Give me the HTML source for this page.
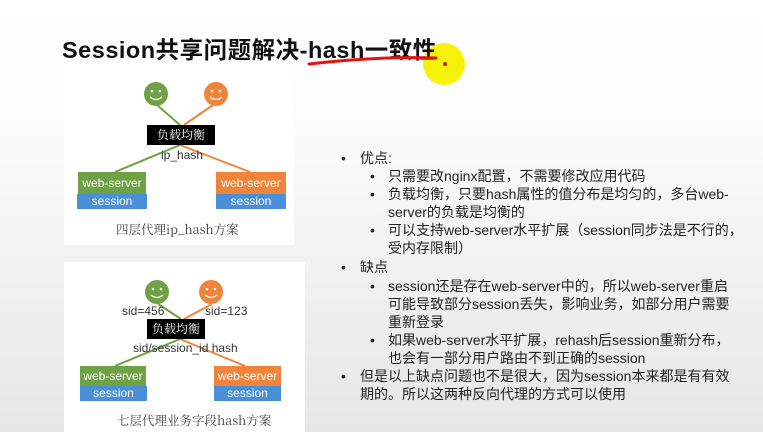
<!DOCTYPE html>
<html><head><meta charset="utf-8"><style>
*{margin:0;padding:0}
body{width:763px;height:432px;overflow:hidden;position:relative;background:linear-gradient(#fff 0,#fdfdfd 100px,#f3f3f3 250px,#e6e6e6 432px);font-family:"Liberation Sans","Noto Sans CJK SC",sans-serif}
.a{position:absolute;white-space:nowrap}
.t{left:62px;top:31px;font-size:23.5px;font-weight:bold;color:#111;letter-spacing:0.5px}
.card{position:absolute;background:#fff}
.bx{position:absolute;color:#fff;font-size:12px;text-align:center}
.b{position:absolute;font-size:12px;color:#333}
.l{position:absolute;white-space:nowrap;font-size:14px;color:#222;line-height:18px}
</style></head><body>
<svg class="a" style="left:0;top:0" width="763" height="432">
<circle cx="444" cy="64" r="21" fill="#f7f20a"/>
<circle cx="445" cy="64" r="2" fill="#d11"/>
</svg>
<div class="a t">Session共享问题解决-hash一致性</div>
<svg class="a" style="left:0;top:0" width="763" height="432">
<path d="M309 64 Q380 56 436 58" stroke="#e3140f" stroke-width="3" fill="none" stroke-linecap="round"/>
</svg>
<div class="card" style="left:64px;top:62px;width:230px;height:183px"></div>
<div class="card" style="left:64px;top:262px;width:241px;height:170px"></div>
<svg class="a" style="left:0;top:0" width="763" height="432">
<g stroke-width="2" fill="none">
<path d="M157 105 L180 125" stroke="#6ea244"/>
<path d="M213 105 L184 125" stroke="#f0843a"/>
<path d="M180 145 L115 172" stroke="#6ea244"/>
<path d="M180 145 L250 172" stroke="#f0843a"/>
<path d="M158 304 L181 319" stroke="#6ea244"/>
<path d="M212 304 L184 319" stroke="#f0843a"/>
<path d="M180 339 L115 366" stroke="#6ea244"/>
<path d="M180 339 L245 366" stroke="#f0843a"/>
</g>
<circle cx="156" cy="94" r="12" fill="#6ea244"/><circle cx="216" cy="94" r="12" fill="#f0843a"/>
<circle cx="157" cy="292" r="12" fill="#6ea244"/><circle cx="211" cy="292" r="12" fill="#f0843a"/>
<g fill="#fff"><circle cx="152" cy="91" r="1.3"/><circle cx="160" cy="91" r="1.3"/><circle cx="212" cy="91" r="1.3"/><circle cx="220" cy="91" r="1.3"/>
<circle cx="153" cy="289" r="1.3"/><circle cx="161" cy="289" r="1.3"/><circle cx="207" cy="289" r="1.3"/><circle cx="215" cy="289" r="1.3"/></g>
<g stroke="#fff" stroke-width="1.3" fill="none"><path d="M150 97 Q156 102 162 97"/><path d="M210 97 Q216 102 222 97"/><path d="M151 295 Q157 300 163 295"/><path d="M205 295 Q211 300 217 295"/></g>
</svg>
<div class="bx" style="left:147px;top:125px;width:68px;height:20px;background:#000;line-height:20px;font-family:'Noto Serif CJK SC',serif">负载均衡</div>
<div class="b" style="left:161px;top:148px">ip_hash</div>
<div class="bx" style="left:78px;top:172px;width:68px;height:22px;line-height:22px;background:#6ea244">web-server</div>
<div class="bx" style="left:77px;top:194px;width:70px;height:15px;line-height:15px;background:#4a90d9">session</div>
<div class="bx" style="left:216px;top:172px;width:70px;height:22px;line-height:22px;background:#f0843a">web-server</div>
<div class="bx" style="left:216px;top:194px;width:70px;height:15px;line-height:15px;background:#4a90d9">session</div>
<div class="a" style="left:116px;top:220px;font-size:12.5px;color:#444;font-family:'Noto Serif CJK SC',serif">四层代理ip_hash方案</div>

<div class="b" style="left:122px;top:304px">sid=456</div>
<div class="b" style="left:205px;top:304px">sid=123</div>
<div class="bx" style="left:147px;top:319px;width:58px;height:20px;background:#000;line-height:20px;font-family:'Noto Serif CJK SC',serif">负载均衡</div>
<div class="b" style="left:133px;top:341px">sid/session_id hash</div>
<div class="bx" style="left:80px;top:366px;width:66px;height:20px;line-height:20px;background:#6ea244">web-server</div>
<div class="bx" style="left:80px;top:386px;width:67px;height:15px;line-height:15px;background:#4a90d9">session</div>
<div class="bx" style="left:214px;top:366px;width:67px;height:20px;line-height:20px;background:#f0843a">web-server</div>
<div class="bx" style="left:214px;top:386px;width:67px;height:15px;line-height:15px;background:#4a90d9">session</div>
<div class="a" style="left:117px;top:411px;font-size:12.5px;color:#444;font-family:'Noto Serif CJK SC',serif">七层代理业务字段hash方案</div>

<div class="l" style="left:341px;top:149px">•</div><div class="l" style="left:360px;top:149px">优点:</div>
<div class="l" style="left:370px;top:167px">•</div><div class="l" style="left:388px;top:167px">只需要改nginx配置，不需要修改应用代码</div>
<div class="l" style="left:370px;top:185px">•</div><div class="l" style="left:388px;top:185px">负载均衡，只要hash属性的值分布是均匀的，多台web-</div>
<div class="l" style="left:388px;top:203px">server的负载是均衡的</div>
<div class="l" style="left:370px;top:221px">•</div><div class="l" style="left:388px;top:221px">可以支持web-server水平扩展（session同步法是不行的，</div>
<div class="l" style="left:388px;top:239px">受内存限制）</div>
<div class="l" style="left:341px;top:258px">•</div><div class="l" style="left:360px;top:258px">缺点</div>
<div class="l" style="left:370px;top:277px">•</div><div class="l" style="left:388px;top:277px">session还是存在web-server中的，所以web-server重启</div>
<div class="l" style="left:388px;top:295px">可能导致部分session丢失，影响业务，如部分用户需要</div>
<div class="l" style="left:388px;top:313px">重新登录</div>
<div class="l" style="left:370px;top:331px">•</div><div class="l" style="left:388px;top:331px">如果web-server水平扩展，rehash后session重新分布，</div>
<div class="l" style="left:388px;top:349px">也会有一部分用户路由不到正确的session</div>
<div class="l" style="left:341px;top:367px">•</div><div class="l" style="left:360px;top:367px">但是以上缺点问题也不是很大，因为session本来都是有有效</div>
<div class="l" style="left:360px;top:385px">期的。所以这两种反向代理的方式可以使用</div>
</body></html>
